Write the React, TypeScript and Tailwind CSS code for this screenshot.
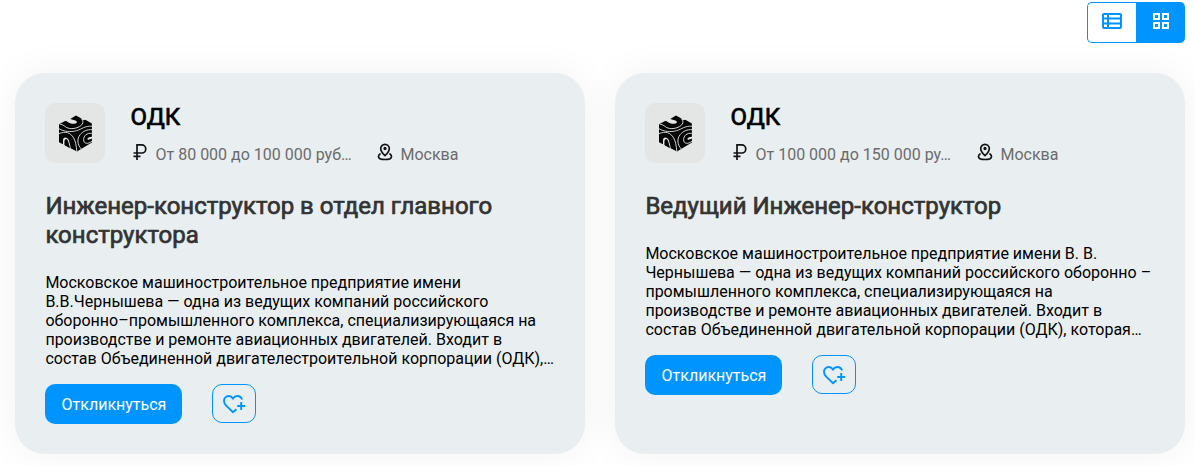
type Vacancy = {
  company: string;
  salary: string;
  city: string;
  title: string;
  lines: string[];
};

const vacancies: Vacancy[] = [
  {
    company: "ОДК",
    salary: "От 80 000 до 100 000 руб…",
    city: "Москва",
    title: "Инженер-конструктор в отдел главного конструктора",
    lines: [
      "Московское машиностроительное предприятие имени",
      "В.В.Чернышева — одна из ведущих компаний российского",
      "оборонно–промышленного комплекса, специализирующаяся на",
      "производстве и ремонте авиационных двигателей. Входит в",
      "состав Объединенной двигателестроительной корпорации (ОДК),…",
    ],
  },
  {
    company: "ОДК",
    salary: "От 100 000 до 150 000 ру…",
    city: "Москва",
    title: "Ведущий Инженер-конструктор",
    lines: [
      "Московское машиностроительное предприятие имени В. В.",
      "Чернышева — одна из ведущих компаний российского оборонно –",
      "промышленного комплекса, специализирующаяся на",
      "производстве и ремонте авиационных двигателей. Входит в",
      "состав Объединенной двигательной корпорации (ОДК), которая…",
    ],
  },
];

function ListIcon() {
  return (
    <svg width="20" height="16" viewBox="0 0 20 16" fill="none" stroke="currentColor" strokeWidth="2">
      <rect x="1" y="1" width="18" height="14" rx="1" />
      <path d="M6 1v14M1 5.5h18M1 10.5h18" />
    </svg>
  );
}

function GridIcon() {
  return (
    <svg width="16" height="16" viewBox="0 0 16 16" fill="none" stroke="currentColor" strokeWidth="2">
      <rect x="1" y="1" width="5" height="5" />
      <rect x="10" y="1" width="5" height="5" />
      <rect x="1" y="10" width="5" height="5" />
      <rect x="10" y="10" width="5" height="5" />
    </svg>
  );
}

function RubleIcon() {
  return (
    <svg width="14" height="16" viewBox="0 0 14 16" fill="none" stroke="#111" strokeWidth="1.7">
      <path d="M4 16V.9h4.7a4.05 4.05 0 0 1 0 8.1H.5M.5 12.4h7" />
    </svg>
  );
}

function PinIcon() {
  return (
    <svg width="16" height="18" viewBox="0 0 16 18" fill="none" stroke="#111" strokeWidth="1.7" strokeLinecap="round" strokeLinejoin="round">
      <path d="M8 12.7C5.4 10.4 3.7 8.3 3.7 5.6a4.3 4.3 0 0 1 8.6 0c0 2.7-1.7 4.8-4.3 7.1Z" />
      <circle cx="8" cy="5.5" r="0.8" fill="#111" />
      <path d="M3 11C1.9 11.7 1.5 12.5 1.5 13.4c0 2 2.8 3.1 6.5 3.1s6.5-1.1 6.5-3.1c0-.9-.4-1.7-1.5-2.4" />
    </svg>
  );
}

function HeartPlusIcon() {
  return (
    <svg width="24" height="20" viewBox="0 0 24 20" fill="none" stroke="currentColor" strokeWidth="1.9">
      <path d="M14.5 15.2 11 18.2 4.2 11.6C2.5 9.9 2 8.3 2 6.7A4.7 4.7 0 0 1 6.7 2c1.8 0 3.3.9 4.3 2.5C12 2.9 13.5 2 15.3 2c2.2 0 4 1.3 4.7 3.5" />
      <path d="M19.2 8v8M15.2 12h8" />
    </svg>
  );
}

function CubeLogo() {
  return (
    <svg width="34" height="38" viewBox="0 0 34 38">
      <path
        d="M1 10.2 6.5 7.2c1.6-.5 2.5.2 4 1.3 2.2 1.4 5.7 1.8 7.6.7 1.8-1.1.7-2.3-1.6-2.9L12.2 4.9 18 1.5 23 4.3l1.6 2 2.8-.6 6.5 3.8v19L19 37.4 1 28.2Z"
        fill="#050505"
      />
      <g fill="none" stroke="#e4e6e6" strokeWidth="0.9">
        <path d="M1.8 10.2c4-.4 5 3.7 9.8 4.3 5.8.7 12.4-2 13.2-5.8.3-1.4-.1-2.6-1.1-3.6" />
        <path d="M1 14.7c5 3 11.5 3.7 17.5 2 6-1.8 8.1-4.9 15.4-4.5" />
        <path d="M1 19.6c6.5-2.6 11.3-1.2 14.6 4.3 2 3.6 2.8 7.8 3.2 13.5" />
        <path d="M23.3 35c-3.8-4.2-4.7-9.8-1.2-14.3 2.9-3.7 7.2-5.3 12-5.1" />
        <path d="M33.8 19.4c-5-.8-8.2 2.6-8.2 6.2 0 4.3 4 4.9 8.3 1.7" />
      </g>
      <path d="M34 22.7c-2.7-.1-4.5 1.2-4.6 2.3 0 1 2 .8 4.6-.5Z" fill="#e4e6e6" />
      <path d="M5 31v-4.6c0-4.2 4.9-3.6 6.1.7l1.8 7.3-.8-.4-2-6.6c-1.1-3.1-3.5-3.2-3.5.2v4.2Z" fill="#e4e6e6" />
      <path d="M6.7 31v-3.6c0-2.2 2.2-1.9 3 .3l1.9 6.3Z" fill="#050505" />
    </svg>
  );
}

function VacancyCard({ vacancy }: { vacancy: Vacancy }) {
  return (
    <article className="rounded-[30px] bg-[#e9eff1] p-[30px] shadow-[0_0_40px_rgba(0,0,0,0.055)]">
      <header className="flex h-[60px]">
        <div className="flex size-[60px] shrink-0 items-center justify-center rounded-[10px] bg-[#e4e6e6]">
          <CubeLogo />
        </div>
        <div className="ml-[25px]">
          <h2 className="h-[28px] pl-[0.5px] text-[24px] leading-[28px] text-black [-webkit-text-stroke:0.7px_#000]">{vacancy.company}</h2>
          <div className="mt-[10px] flex h-[28px] text-[16px] leading-[28px] text-[#6b6b6b]">
            <span className="mr-[8.5px] ml-[3px] pt-[3px]"><RubleIcon /></span>
            <span className="w-[197.5px] whitespace-nowrap">{vacancy.salary}</span>
            <span className="mr-[7.5px] ml-[24px] pt-[2px]"><PinIcon /></span>
            <span>{vacancy.city}</span>
          </div>
        </div>
      </header>
      <h3 className="mt-[29px] pl-[0.4px] text-[24px] leading-[29px] text-[#333] [-webkit-text-stroke:0.7px_#333]">{vacancy.title}</h3>
      <p className="mt-[23px] pl-[0.4px] text-[16px] leading-[19px] whitespace-nowrap text-black">
        {vacancy.lines.map((line) => (
          <span key={line} className="block">{line}</span>
        ))}
      </p>
      <div className="mt-[16px] flex gap-[30px]">
        <button className="h-[40px] w-[137px] rounded-[10px] bg-[#0094ff] pt-[2px] pl-[1px] text-[16px] text-white">Откликнуться</button>
        <button className="flex h-[39px] w-[44px] items-center justify-center rounded-[10px] border border-[#0094ff] text-[#0094ff]">
          <HeartPlusIcon />
        </button>
      </div>
    </article>
  );
}

export default function App() {
  return (
    <main className="h-[466px] overflow-hidden bg-white px-[15px] pt-[2px] font-[Roboto,sans-serif]">
      <div className="mr-[-5px] flex h-[41px] justify-end">
        <button className="flex h-[41px] w-[49px] items-center justify-center rounded-l-[5px] border border-r-0 border-[#0094ff] pb-[3px] text-[#0094ff]">
          <ListIcon />
        </button>
        <button className="flex h-[41px] w-[49px] items-center justify-center rounded-r-[5px] bg-[#0094ff] pb-[3px] text-white">
          <GridIcon />
        </button>
      </div>
      <section className="mt-[30px] grid h-[381px] grid-cols-[570px_570px] gap-[30px]">
        {vacancies.map((vacancy) => (
          <VacancyCard key={vacancy.title} vacancy={vacancy} />
        ))}
      </section>
    </main>
  );
}
